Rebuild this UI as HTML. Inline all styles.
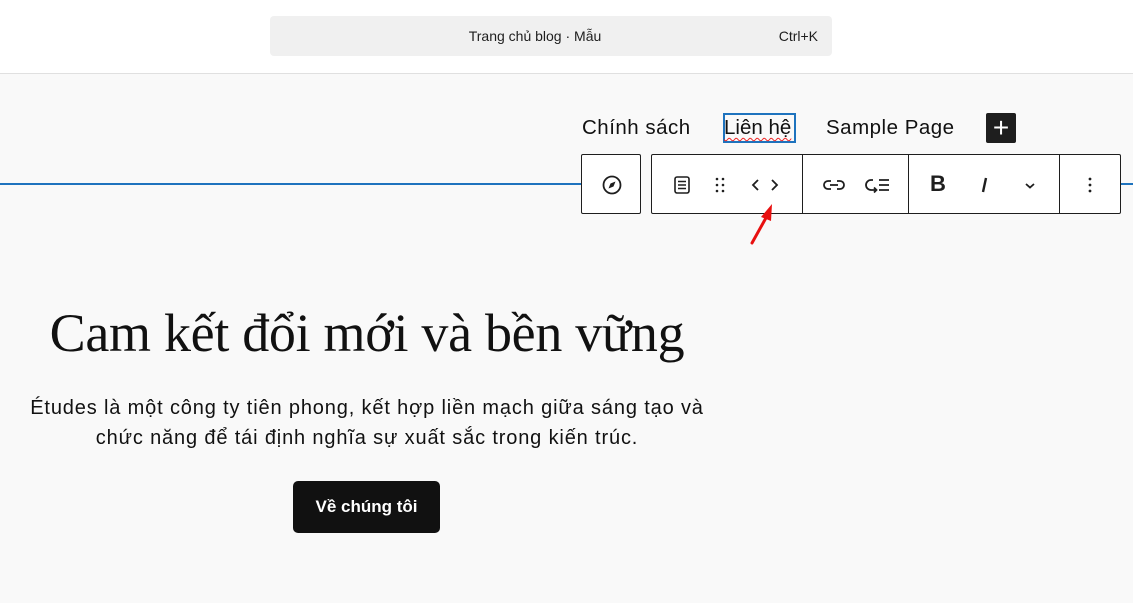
<!DOCTYPE html>
<html><head><meta charset="utf-8"><style>
*{margin:0;padding:0;box-sizing:border-box}
body{width:1133px;height:603px;overflow:hidden;background:#f9f9f9;font-family:"Liberation Sans",sans-serif;position:relative;color:#111}
.top{position:absolute;left:0;top:0;width:1133px;height:74px;background:#fff;border-bottom:1px solid #e0e0e0}
.cmd{position:absolute;left:270px;top:16px;width:562px;height:40px;background:#f0f0f0;border-radius:4px;font-size:14px;color:#1e1e1e}
.cmd .t{position:absolute;left:-16px;width:100%;text-align:center;top:12px}
.cmd .k{position:absolute;right:14px;top:12px}
.nav{position:absolute;top:116px;font-size:20.5px;letter-spacing:0.5px;color:#111}
.line{position:absolute;top:183px;height:2px;background:#1e73be}
.box{position:absolute;top:154px;height:60px;background:#fff;border:1px solid #1e1e1e;border-radius:2px}
.div{position:absolute;top:0;width:1px;height:58px;background:#1e1e1e}
svg.i{position:absolute}
h1{position:absolute;left:0;width:734px;top:302px;text-align:center;font-family:"Liberation Serif",serif;font-weight:normal;font-size:54px;color:#111;letter-spacing:-0.3px}
p{position:absolute;left:0;width:734px;top:393px;text-align:center;font-size:20px;letter-spacing:0.85px;line-height:30px;color:#111}
.btn{position:absolute;left:293px;top:481px;width:147px;height:52px;background:#111;border-radius:5px;color:#fff;font-size:17px;font-weight:bold;text-align:center;line-height:52px}
</style></head><body>
<div class="top"><div class="cmd"><div class="t">Trang chủ blog · Mẫu</div><div class="k">Ctrl+K</div></div></div>
<div class="line" style="left:0;width:582px"></div>
<div class="line" style="left:1120px;width:13px"></div>
<div class="nav" style="left:582px">Chính sách</div>
<div style="position:absolute;left:723px;top:113px;width:73px;height:30px;border:2px solid #1e73be"></div>
<div class="nav" style="left:724px;letter-spacing:0;text-decoration:underline wavy #e22;text-underline-offset:3px;text-decoration-thickness:1px">Liên hệ</div>
<div class="nav" style="left:826px">Sample Page</div>
<div style="position:absolute;left:986px;top:113px;width:30px;height:30px;background:#1e1e1e;border-radius:2px;color:#fff;font-size:28px;line-height:29px;text-align:center">+</div>
<div class="box" style="left:581px;width:60px">
<svg class="i" style="left:18px;top:18px" width="24" height="24" viewBox="0 0 24 24"><circle cx="12" cy="12" r="8.5" fill="none" stroke="#1e1e1e" stroke-width="1.8"/><path d="M15.5 8.5L13.5 13.5 8.5 15.5 10.5 10.5Z" fill="#1e1e1e"/></svg>
</div>
<div class="box" style="left:651px;width:470px">
<svg class="i" style="left:18px;top:18px" width="24" height="24" viewBox="0 0 24 24"><rect x="5" y="4" width="14" height="16" rx="2" fill="none" stroke="#1e1e1e" stroke-width="1.6"/><path d="M8 8.5h8M8 12h8M8 15.5h8" stroke="#1e1e1e" stroke-width="1.6"/></svg>
<svg class="i" style="left:56px;top:18px" width="24" height="24" viewBox="0 0 24 24"><g fill="#1e1e1e"><circle cx="9" cy="6" r="1.3"/><circle cx="15" cy="6" r="1.3"/><circle cx="9" cy="12" r="1.3"/><circle cx="15" cy="12" r="1.3"/><circle cx="9" cy="18" r="1.3"/><circle cx="15" cy="18" r="1.3"/></g></svg>
<svg class="i" style="left:96px;top:18px" width="34" height="24" viewBox="0 0 34 24"><path d="M10 7L5 12 10 17M24 7L29 12 24 17" fill="none" stroke="#1e1e1e" stroke-width="1.8"/></svg>
<div class="div" style="left:150px"></div>
<svg class="i" style="left:168px;top:18px" width="28" height="24" viewBox="0 0 28 24"><path d="M11 8H8a4 4 0 000 8h3M17 8h3a4 4 0 010 8h-3M10 12h8" fill="none" stroke="#1e1e1e" stroke-width="1.8"/></svg>
<svg class="i" style="left:212px;top:18px" width="28" height="24" viewBox="0 0 28 24"><path d="M9 7H7a4 4 0 000 10h5M10 14.5l2.5 2.5-2.5 2.5M15 7h10M15 12h10M15 17h10" fill="none" stroke="#1e1e1e" stroke-width="1.8"/></svg>
<div class="div" style="left:256px"></div>
<div style="position:absolute;left:278px;top:16px;font-size:22px;font-weight:bold;color:#1e1e1e">B</div>
<svg class="i" style="left:322px;top:18px" width="20" height="24" viewBox="0 0 20 24"><path d="M12 5L9 19" stroke="#1e1e1e" stroke-width="2.4"/></svg>
<svg class="i" style="left:366px;top:18px" width="24" height="24" viewBox="0 0 24 24"><path d="M8 11l4 3.5 4-3.5" fill="none" stroke="#1e1e1e" stroke-width="1.8"/></svg>
<div class="div" style="left:407px"></div>
<svg class="i" style="left:426px;top:18px" width="24" height="24" viewBox="0 0 24 24"><g fill="#1e1e1e"><circle cx="12" cy="6" r="1.4"/><circle cx="12" cy="12" r="1.4"/><circle cx="12" cy="18" r="1.4"/></g></svg>
</div>
<svg class="i" style="left:745px;top:200px" width="35" height="50" viewBox="0 0 35 50"><path d="M7 43L22 16" stroke="#e81010" stroke-width="3" stroke-linecap="round"/><path d="M27 4L16 17 26 21Z" fill="#e81010"/></svg>
<h1>Cam kết đổi mới và bền vững</h1>
<p>Études là một công ty tiên phong, kết hợp liền mạch giữa sáng tạo và<br>chức năng để tái định nghĩa sự xuất sắc trong kiến trúc.</p>
<div class="btn">Về chúng tôi</div>
</body></html>
